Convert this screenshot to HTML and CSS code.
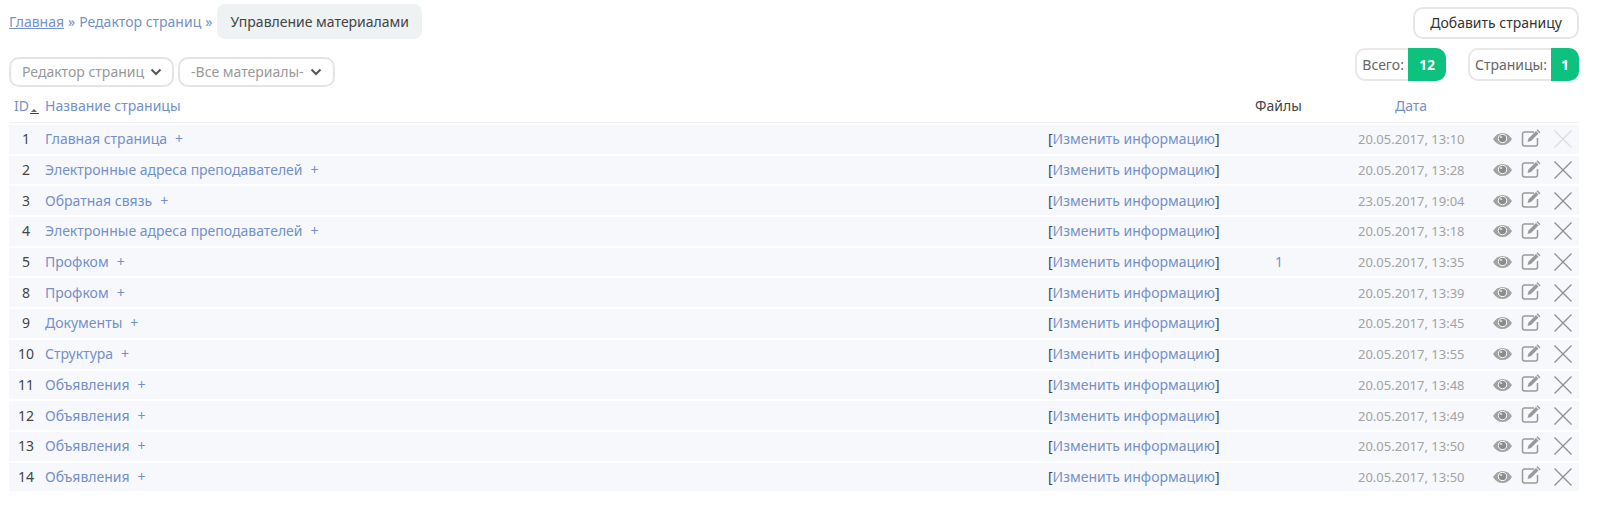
FILE: index.html
```html
<!DOCTYPE html>
<html lang="ru">
<head>
<meta charset="utf-8">
<title>Управление материалами</title>
<link rel="stylesheet" href="styles.css">
</head>
<body>
<svg class="defs" width="0" height="0" aria-hidden="true">
  <symbol id="eye" viewBox="0 0 20 14"><path d="M0.5 7C3 3 6.2 1 10 1s7 2 9.500 6c-2.500 4-5.700 6-9.500 6S3 11 .5 7z" fill="#a3a3a3"/><circle cx="10" cy="6.500" r="4.200" fill="#8b8b8b" stroke="#fff" stroke-width="1"/><ellipse cx="8.500" cy="5" rx="1.500" ry="1" fill="#d8d8d8"/></symbol>
  <symbol id="edit" viewBox="0 0 20 18"><path d="M13 3H3.500A2 2 0 0 0 1.500 5v10a2 2 0 0 0 2 2h11a2 2 0 0 0 2-2V9" fill="none" stroke="#999" stroke-width="1.500"/><path d="M6.500 13l1-3.500 7.500-7.500 2.500 2.500-7.500 7.500z" fill="#999"/><path d="M15.500 1.200l1-1 3 3-1 1z" fill="#999"/></symbol>
  <symbol id="cross" viewBox="0 0 20 20"><path d="M1.500 1.500l17 17M18.500 1.500l-17 17" fill="none" stroke="currentColor" stroke-width="1.300"/></symbol>
</svg>
<div class="top">
  <nav class="crumbs"><a class="ul" href="#">Главная</a><span class="sep">»</span><a href="#">Редактор страниц</a><span class="sep">»</span><span class="current">Управление материалами</span></nav>
  <a class="btn" href="#">Добавить страницу</a>
</div>
<div class="bar">
  <div class="filters">
    <span class="select">Редактор страниц<svg class="chev" viewBox="0 0 12 8"><path d="M1.500 1.500L6 6l4.500-4.500" fill="none" stroke="#555" stroke-width="2"/></svg></span>
    <span class="select select-b">-Все материалы-<svg class="chev" viewBox="0 0 12 8"><path d="M1.500 1.500L6 6l4.500-4.500" fill="none" stroke="#555" stroke-width="2"/></svg></span>
  </div>
  <div class="stats">
    <span class="stat"><span class="stat-l">Всего:</span><b class="stat-n wide">12</b></span>
    <span class="stat"><span class="stat-l">Страницы:</span><b class="stat-n">1</b></span>
  </div>
</div>
<table class="grid">
  <colgroup><col class="c-id"><col class="c-title"><col class="c-info"><col class="c-files"><col class="c-date"><col class="c-act"></colgroup>
  <thead>
    <tr><th class="h-id"><a href="#">ID</a><i class="sort"></i></th><th><a href="#">Название страницы</a></th><th></th><th class="h-files">Файлы</th><th class="h-date"><a href="#">Дата</a></th><th></th></tr>
  </thead>
  <tbody>
    <tr><td class="id">1</td><td><a href="#">Главная страница</a><a class="plus" href="#">+</a></td><td class="info">[<a href="#">Изменить информацию</a>]</td><td></td><td class="date">20.05.2017, 13:10</td><td class="act off"><span class="icons"><svg class="i-eye"><use href="#eye"/></svg><svg class="i-edit"><use href="#edit"/></svg><svg class="i-x"><use href="#cross"/></svg></span></td></tr>
    <tr><td class="id">2</td><td><a href="#">Электронные адреса преподавателей</a><a class="plus" href="#">+</a></td><td class="info">[<a href="#">Изменить информацию</a>]</td><td></td><td class="date">20.05.2017, 13:28</td><td class="act"><span class="icons"><svg class="i-eye"><use href="#eye"/></svg><svg class="i-edit"><use href="#edit"/></svg><svg class="i-x"><use href="#cross"/></svg></span></td></tr>
    <tr><td class="id">3</td><td><a href="#">Обратная связь</a><a class="plus" href="#">+</a></td><td class="info">[<a href="#">Изменить информацию</a>]</td><td></td><td class="date">23.05.2017, 19:04</td><td class="act"><span class="icons"><svg class="i-eye"><use href="#eye"/></svg><svg class="i-edit"><use href="#edit"/></svg><svg class="i-x"><use href="#cross"/></svg></span></td></tr>
    <tr><td class="id">4</td><td><a href="#">Электронные адреса преподавателей</a><a class="plus" href="#">+</a></td><td class="info">[<a href="#">Изменить информацию</a>]</td><td></td><td class="date">20.05.2017, 13:18</td><td class="act"><span class="icons"><svg class="i-eye"><use href="#eye"/></svg><svg class="i-edit"><use href="#edit"/></svg><svg class="i-x"><use href="#cross"/></svg></span></td></tr>
    <tr><td class="id">5</td><td><a href="#">Профком</a><a class="plus" href="#">+</a></td><td class="info">[<a href="#">Изменить информацию</a>]</td><td class="files"><a href="#">1</a></td><td class="date">20.05.2017, 13:35</td><td class="act"><span class="icons"><svg class="i-eye"><use href="#eye"/></svg><svg class="i-edit"><use href="#edit"/></svg><svg class="i-x"><use href="#cross"/></svg></span></td></tr>
    <tr><td class="id">8</td><td><a href="#">Профком</a><a class="plus" href="#">+</a></td><td class="info">[<a href="#">Изменить информацию</a>]</td><td></td><td class="date">20.05.2017, 13:39</td><td class="act"><span class="icons"><svg class="i-eye"><use href="#eye"/></svg><svg class="i-edit"><use href="#edit"/></svg><svg class="i-x"><use href="#cross"/></svg></span></td></tr>
    <tr><td class="id">9</td><td><a href="#">Документы</a><a class="plus" href="#">+</a></td><td class="info">[<a href="#">Изменить информацию</a>]</td><td></td><td class="date">20.05.2017, 13:45</td><td class="act"><span class="icons"><svg class="i-eye"><use href="#eye"/></svg><svg class="i-edit"><use href="#edit"/></svg><svg class="i-x"><use href="#cross"/></svg></span></td></tr>
    <tr><td class="id">10</td><td><a href="#">Структура</a><a class="plus" href="#">+</a></td><td class="info">[<a href="#">Изменить информацию</a>]</td><td></td><td class="date">20.05.2017, 13:55</td><td class="act"><span class="icons"><svg class="i-eye"><use href="#eye"/></svg><svg class="i-edit"><use href="#edit"/></svg><svg class="i-x"><use href="#cross"/></svg></span></td></tr>
    <tr><td class="id">11</td><td><a href="#">Объявления</a><a class="plus" href="#">+</a></td><td class="info">[<a href="#">Изменить информацию</a>]</td><td></td><td class="date">20.05.2017, 13:48</td><td class="act"><span class="icons"><svg class="i-eye"><use href="#eye"/></svg><svg class="i-edit"><use href="#edit"/></svg><svg class="i-x"><use href="#cross"/></svg></span></td></tr>
    <tr><td class="id">12</td><td><a href="#">Объявления</a><a class="plus" href="#">+</a></td><td class="info">[<a href="#">Изменить информацию</a>]</td><td></td><td class="date">20.05.2017, 13:49</td><td class="act"><span class="icons"><svg class="i-eye"><use href="#eye"/></svg><svg class="i-edit"><use href="#edit"/></svg><svg class="i-x"><use href="#cross"/></svg></span></td></tr>
    <tr><td class="id">13</td><td><a href="#">Объявления</a><a class="plus" href="#">+</a></td><td class="info">[<a href="#">Изменить информацию</a>]</td><td></td><td class="date">20.05.2017, 13:50</td><td class="act"><span class="icons"><svg class="i-eye"><use href="#eye"/></svg><svg class="i-edit"><use href="#edit"/></svg><svg class="i-x"><use href="#cross"/></svg></span></td></tr>
    <tr><td class="id">14</td><td><a href="#">Объявления</a><a class="plus" href="#">+</a></td><td class="info">[<a href="#">Изменить информацию</a>]</td><td></td><td class="date">20.05.2017, 13:50</td><td class="act"><span class="icons"><svg class="i-eye"><use href="#eye"/></svg><svg class="i-edit"><use href="#edit"/></svg><svg class="i-x"><use href="#cross"/></svg></span></td></tr>
  </tbody>
</table>
</body>
</html>
```
FILE: styles.css
```css
* { box-sizing: border-box; }
html, body { margin: 0; background: #fff; }
body {
  padding: 4px 21px 0 9px;
  height: 505px;
  overflow: hidden;
  font-family: "Noto Sans", sans-serif;
  font-size: 14px;
  line-height: 20px;
  color: #444;
}
a { color: #7490c9; text-decoration: none; }
.defs { position: absolute; }

.top { display: flex; justify-content: space-between; align-items: flex-start; }
.crumbs { display: flex; align-items: center; height: 35px; }
.crumbs .ul { text-decoration: underline; }
.sep { margin: 0 4px; color: #7490c9; }
.current { margin-left: 1px; padding: 0 13px; height: 35px; line-height: 35px; background: #eff2f3; border-radius: 8px; color: #444; }
.btn { margin-top: 3px; height: 32px; line-height: 28px; padding: 0 15px; border: 2px solid #e6e6e6; border-radius: 10px; color: #333; }

.bar { display: flex; justify-content: space-between; align-items: flex-start; margin-top: 9px; height: 42px; }
.filters { display: flex; gap: 4px; padding-top: 9px; }
.select { display: inline-flex; align-items: center; height: 30px; padding: 0 10px 0 11px; border: 2px solid #e4e4e4; border-radius: 10px; color: #999; }
.select-b { padding: 0 11px 0 11px; }
.chev { width: 12px; height: 8px; margin-left: 6px; }
.stats { display: flex; gap: 22px; }
.stat { display: flex; height: 33px; border: 2px solid #e8e8e8; border-radius: 10px; }
.stat-l { padding: 0 4px 0 5px; line-height: 29px; color: #666; }
.stat-n { margin: -2px -2px -2px 0; padding: 0 10px; line-height: 33px; background: #0cc27e; color: #fff; border-radius: 0 10px 10px 0; font-weight: 700; }
.stat-n.wide { padding: 0 11px; }

.grid { width: 1570px; table-layout: fixed; border-collapse: separate; border-spacing: 0 2px; }
.c-id { width: 36px; }
.c-title { width: 1003px; }
.c-info { width: 207px; }
.c-files { width: 101px; }
.c-date { width: 134px; }
.c-act { width: 89px; }
th { height: 31px; padding: 4px 0 0; vertical-align: top; font-weight: 400; text-align: left; border-bottom: 1px solid #eceeef; }
.h-id { padding-left: 5px; white-space: nowrap; }
.sort { display: inline-block; width: 9px; height: 6px; margin-left: 1px; vertical-align: -3px; border-bottom: 1px solid #444; position: relative; }
.sort::before { content: ""; position: absolute; left: 1px; bottom: 1px; border: 3.500px solid transparent; border-top: 0; border-bottom: 3px solid #666; }
.h-files { color: #444; }
.h-date { padding-left: 39px; }
tbody tr { height: 28.7px; }
td { padding: 0; background: #f7f8fb; }
.id { text-align: center; padding-right: 2px; }
.plus { margin-left: 8px; }
.info { white-space: nowrap; }
.files { padding-left: 20px; }
.date { color: #a3a3a3; font-size: 13px; padding-left: 2px; white-space: nowrap; }
.icons { display: flex; align-items: center; padding-left: 2px; color: #8f8f8f; }
.off .i-x { color: #dcdcdc; }
.i-eye { width: 21px; height: 14px; }
.i-edit { width: 20px; height: 18px; margin: -3px 12px 0 8px; }
.i-x { width: 20px; height: 20px; }
```
